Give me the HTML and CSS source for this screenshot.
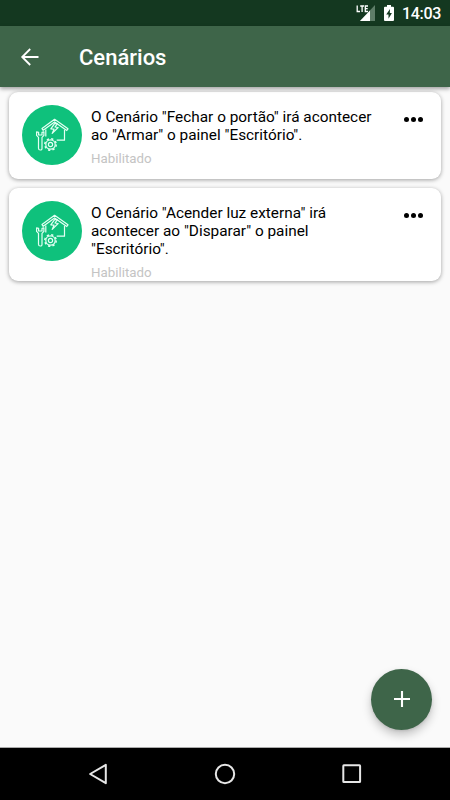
FILE: index.html
```html
<!DOCTYPE html>
<html lang="pt-BR">
<head>
<meta charset="utf-8">
<title>Cenários</title>
<link rel="stylesheet" href="styles.css">
</head>
<body>
<svg class="defs" width="0" height="0" aria-hidden="true">
  <symbol id="scene" viewBox="0 0 44 44">
    <g fill="none" stroke="#e4fff3" stroke-width="1.2" stroke-linejoin="round">
      <path d="M12 15.6 24.6 6.3 38 15.8 36.8 17.5 24.6 8.9 13.2 17.3Z"/>
      <path d="M15.8 16.5V23.5M34.5 16.8V27.2H26.7"/>
      <path d="M24.8 10.3 20.8 15.8 24 16.2 22.2 20.4 28.1 14.5 25 14 27.3 10.8Z"/>
      <path d="M6.6 18.8V22.4L8.5 24.3V35.2Q8.5 37 10.3 37T12 35.2V24.3L13.9 22.4V18.8L12 19.3V22H8.6V19.3Z"/>
      <circle cx="20.5" cy="31.5" r="2.1"/>
      <circle cx="20.5" cy="31.5" r="4.7"/>
      <circle cx="20.5" cy="31.5" r="5.7" stroke-width="1.5" stroke-dasharray="2.2 2.277"/>
    </g>
  </symbol>
</svg>
<div class="screen">
  <div class="status">
    <svg class="signal" width="20" height="18" viewBox="0 0 20 18">
      <path d="M19 1V17H4Z" fill="#5e7d68"/>
      <path d="M14 6.5V17H4Z" fill="#fff"/>
      <path d="M1.2 1.5V7.5H4M4.2 2H8M6.1 2V8M12 2H9.3V7.5H12M9.3 4.7H11.7" fill="none" stroke="#fff" stroke-width="1.3"/>
    </svg>
    <svg class="battery" width="10" height="17" viewBox="0 0 10 17">
      <path d="M3 0H7V1.8H9Q10 1.8 10 2.8V15Q10 16 9 16H1Q0 16 0 15V2.8Q0 1.8 1 1.8H3Z" fill="#fff"/>
      <path d="M6 4 2.2 9.5H4.5V13.8L7.9 8H5.8Z" fill="#143820"/>
    </svg>
    <span class="clock">14:03</span>
  </div>
  <header class="bar">
    <svg class="back" width="20" height="20" viewBox="0 0 20 20"><path d="M10.2 2 2.2 10l8 8M2.2 10H18.5" fill="none" stroke="#fff" stroke-width="1.8"/></svg>
    <h1>Cenários</h1>
  </header>
  <main class="list">
    <article class="card first">
      <div class="avatar"><svg width="44" height="44"><use href="#scene"/></svg></div>
      <div class="body">
        <p class="title">O Cenário "Fechar o portão" irá acontecer<br>ao "Armar" o painel "Escritório".</p>
        <p class="state">Habilitado</p>
      </div>
      <div class="more"><i></i><i></i><i></i></div>
    </article>
    <article class="card second">
      <div class="avatar"><svg width="44" height="44"><use href="#scene"/></svg></div>
      <div class="body">
        <p class="title">O Cenário "Acender luz externa" irá<br>acontecer ao "Disparar" o painel<br>"Escritório".</p>
        <p class="state">Habilitado</p>
      </div>
      <div class="more"><i></i><i></i><i></i></div>
    </article>
    <button class="fab" aria-label="Adicionar"><svg width="16" height="16" viewBox="0 0 16 16"><path d="M8 0V16M0 8H16" stroke="#fff" stroke-width="2.1"/></svg></button>
  </main>
  <nav class="nav">
    <svg width="22" height="22" viewBox="0 0 22 22"><path d="M18.8 1.8V20.2L3.1 11Z"/></svg>
    <svg width="22" height="22" viewBox="0 0 22 22"><circle cx="11" cy="11" r="9.2"/></svg>
    <svg width="22" height="22" viewBox="0 0 22 22"><rect x="2.3" y="2.3" width="16.8" height="16.8" rx=".6"/></svg>
  </nav>
</div>
</body>
</html>
```
FILE: styles.css
```css
* { box-sizing: border-box; margin: 0; }
body { font-family: Roboto, sans-serif; background: #fafafa; }
.defs { display: block; height: 0; }
.screen { position: relative; width: 450px; height: 800px; display: flex; flex-direction: column; overflow: hidden; }
.status { height: 26px; background: #143820; display: flex; padding-left: 356px; color: #fff; }
.signal { margin-top: 4px; }
.battery { margin: 5px 0 0 8px; }
.clock { margin: 4px 0 0 8px; font-size: 16px; line-height: 20px; font-weight: 500; letter-spacing: -.3px; }
.bar { height: 61px; background: #3e6549; display: flex; align-items: center; padding-left: 20px; z-index: 1; box-shadow: 0 2px 4px rgba(0,0,0,.35); }
.bar h1 { margin: 3px 0 0 39px; font-size: 22px; line-height: 28px; font-weight: 500; color: #fff; }
.list { flex: 1; padding: 5px 9px 0; display: flex; flex-direction: column; gap: 9px; }
.card { display: flex; background: #fff; border-radius: 9px; padding: 13px 13px 0; box-shadow: 0 1px 4px rgba(0,0,0,.36); }
.first { height: 87px; }
.second { height: 93px; }
.avatar { width: 60px; height: 60px; flex: none; border-radius: 50%; background: #0fc17c; display: grid; place-items: center; }
.body { margin-left: 9px; padding-top: 3px; width: 300px; white-space: nowrap; }
.title { font-size: 15.37px; line-height: 18px; color: #000; }
.state { margin-top: 7px; font-size: 13.3px; line-height: 16px; color: #c4c4c4; }
.more { display: flex; gap: 2px; margin: 11.5px 0 0 13.3px; }
.more i { width: 5px; height: 5px; border-radius: 50%; background: #000; }
.fab { position: absolute; left: 371px; top: 668.5px; width: 61px; height: 61px; padding: 0; border: 0; border-radius: 50%; background: #3e6549; display: grid; place-items: center; box-shadow: 0 5px 10px rgba(0,0,0,.22), 0 1px 3px rgba(0,0,0,.1); }
.nav { height: 53px; background: #000; border-top: 1px solid #aaa; display: flex; align-items: center; justify-content: space-between; padding: 0 87px; }
.nav svg { fill: none; stroke: #e6e6e6; stroke-width: 2; stroke-linejoin: round; }
```
